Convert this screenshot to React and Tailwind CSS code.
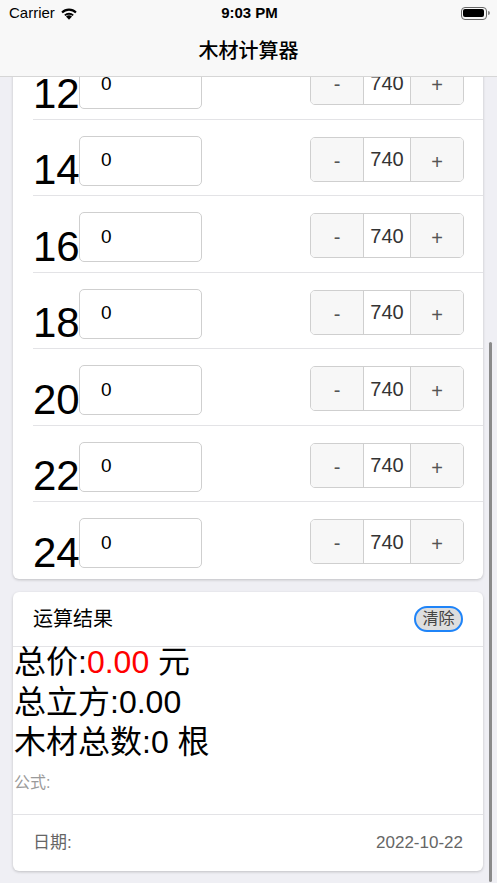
// 木材计算器: 长度列表 + 运算结果
import React from "react";

const FONT = { fontFamily: '"Liberation Sans", "Noto Sans CJK SC", sans-serif' };

const ROWS = [12, 14, 16, 18, 20, 22, 24];

// 状态栏 wifi
const Wifi = () => (
  <svg width="18" height="13" viewBox="0 0 18 13">
    <path d="M9 12.8 L6 9.6 A4.3 4.3 0 0 1 12 9.6 Z" fill="#000" />
    <path d="M4.2 7.7 A6.8 6.8 0 0 1 13.8 7.7 L12.5 9.1 A4.9 4.9 0 0 0 5.5 9.1 Z" fill="#000" />
    <path d="M1.3 4.8 A10.9 10.9 0 0 1 16.7 4.8 L15.2 6.3 A8.8 8.8 0 0 0 2.8 6.3 Z" fill="#000" />
  </svg>
);

const Battery = () => (
  <div className="flex items-center">
    <div className="w-[26px] h-[13px] rounded-[4px] border border-[#666] p-[1.5px]">
      <div className="w-full h-full rounded-[2px] bg-black" />
    </div>
    <div className="w-[2px] h-[4px] rounded-r-sm bg-[#888] ml-[1px]" />
  </div>
);

const Row = ({ size }) => (
  <div className="ml-[20px] h-[76.5px] flex items-start border-b border-[#e3e3e6] last:border-b-0">
    <div className="w-[46px] shrink-0 mt-[29.5px] text-[42px] leading-none text-black">
      {size}
    </div>
    <div className="mt-[16px] w-[123px] h-[50px] rounded-[5px] border border-[#cfcfcf] bg-white flex items-center pl-[21px] text-[19px] text-black">
      0
    </div>
    <div className="ml-auto mr-[19px] mt-[17px] h-[45px] w-[154px] flex rounded-[5px] border border-[#cfcfcf] overflow-hidden text-[20px]">
      <div className="w-[52px] bg-[#f7f7f7] flex items-center justify-center text-[#555] pt-[3px]">-</div>
      <div className="w-[48px] bg-white border-x border-[#cfcfcf] flex items-center justify-center text-[#333]">740</div>
      <div className="flex-1 bg-[#f7f7f7] flex items-center justify-center text-[#555] pt-[5px]">+</div>
    </div>
  </div>
);

export default function App() {
  return (
    <div className="relative w-[497px] h-[883px] overflow-hidden bg-[#efeff4]" style={FONT}>
      {/* 内容 */}
      <div className="pt-[43px]">
        <div className="ml-[13px] w-[470px] bg-white rounded-b-[6px] shadow-[0_1px_3px_rgba(0,0,0,0.2)]">
          {ROWS.map((s) => (
            <Row key={s} size={s} />
          ))}
        </div>

        <div className="ml-[13px] w-[470px] mt-[13px] bg-white rounded-[6px] shadow-[0_1px_3px_rgba(0,0,0,0.2)]">
          <div className="h-[55px] flex items-center justify-between px-[20px] border-b border-[#e3e3e6]">
            <span className="text-[20px] text-black">运算结果</span>
            <button className="w-[49px] h-[26px] rounded-full bg-[#dedede] border-2 border-[#1f84f8] text-[16px] text-[#444] leading-none">
              清除
            </button>
          </div>
          <div className="h-[167px] flex flex-col pl-px">
            <div className="-mt-[5px] text-[32px] leading-[40px] text-black">
              <div>
                总价:<span className="text-[#ff0000]">0.00</span> 元
              </div>
              <div>总立方:0.00</div>
              <div>木材总数:0 根</div>
            </div>
            <div className="mt-[11px] text-[16px] leading-[20px] text-[#9a9a9a]">公式:</div>
          </div>
          <div className="h-[57px] flex items-center justify-between px-[20px] border-t border-[#e3e3e6] text-[17px] text-[#666]">
            <span>日期:</span>
            <span>2022-10-22</span>
          </div>
        </div>
      </div>

      {/* 导航栏 */}
      <div className="absolute top-0 inset-x-0 h-[77px] bg-[#f8f8f8] border-b border-[#d6d6d6]">
        <div className="h-[26px] flex items-center justify-between pl-[9px] pr-[7px] text-[15px] text-black">
          <div className="flex items-center gap-[5px] w-[120px]">
            <span>Carrier</span>
            <Wifi />
          </div>
          <span className="font-bold">9:03 PM</span>
          <div className="w-[120px] flex justify-end">
            <Battery />
          </div>
        </div>
        <div className="h-[50px] flex items-center justify-center text-[20px] font-medium text-black">
          木材计算器
        </div>
      </div>

      {/* 滚动条 */}
      <div className="absolute left-[489px] top-[342px] w-[3px] h-[540px] rounded-full bg-[#8a8a8a]" />
    </div>
  );
}
